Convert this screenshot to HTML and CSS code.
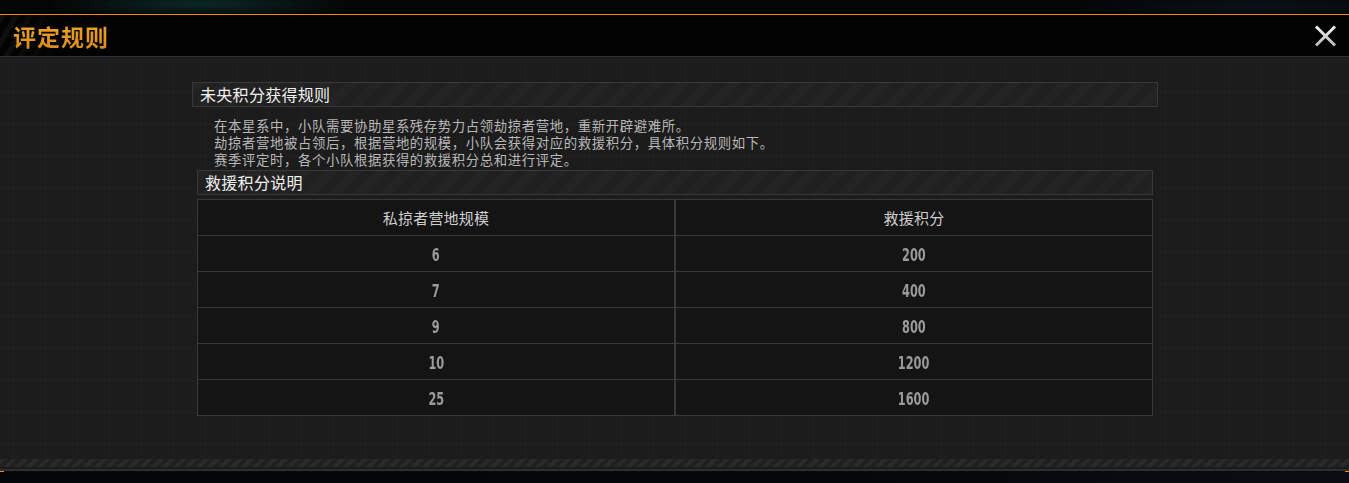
FILE: index.html
```html
<!DOCTYPE html>
<html lang="zh">
<head>
<meta charset="utf-8">
<title>评定规则</title>
<link rel="stylesheet" href="styles.css">
</head>
<body>
<div class="page">
  <div class="topstrip"></div>
  <header class="header">
    <h1 class="title">评定规则</h1>
    <button class="close" aria-label="关闭">
      <svg width="23" height="22" viewBox="0 0 23 22">
        <defs>
          <linearGradient id="xg" x1="0" y1="0" x2="0" y2="1">
            <stop offset="0" stop-color="#f4f4f4"/>
            <stop offset="1" stop-color="#b9b9b9"/>
          </linearGradient>
        </defs>
        <path d="M2 1.5 L21 20.5 M21 1.5 L2 20.5" stroke="url(#xg)" stroke-width="3" stroke-linecap="butt" fill="none"/>
      </svg>
    </button>
  </header>
  <main class="main">
    <div class="content">
      <div class="sec-title sec-title-wide">未央积分获得规则</div>
      <div class="desc">
        <p>在本星系中，小队需要协助星系残存势力占领劫掠者营地，重新开辟避难所。</p>
        <p>劫掠者营地被占领后，根据营地的规模，小队会获得对应的救援积分，具体积分规则如下。</p>
        <p>赛季评定时，各个小队根据获得的救援积分总和进行评定。</p>
      </div>
      <div class="inner">
        <div class="sec-title">救援积分说明</div>
        <table class="score-table">
          <thead>
            <tr><th>私掠者营地规模</th><th>救援积分</th></tr>
          </thead>
          <tbody>
            <tr><td><span class="num">6</span></td><td><span class="num">200</span></td></tr>
            <tr><td><span class="num">7</span></td><td><span class="num">400</span></td></tr>
            <tr><td><span class="num">9</span></td><td><span class="num">800</span></td></tr>
            <tr><td><span class="num">10</span></td><td><span class="num">1200</span></td></tr>
            <tr><td><span class="num">25</span></td><td><span class="num">1600</span></td></tr>
          </tbody>
        </table>
      </div>
    </div>
  </main>
  <footer class="footer">
    <div class="hatch"></div>
    <div class="gap"></div>
    <div class="line"></div>
    <div class="marks"><span class="mark"></span><span class="mark"></span></div>
    <div class="base"></div>
  </footer>
</div>
</body>
</html>
```
FILE: styles.css
```css
* { box-sizing: border-box; }
html, body { margin: 0; padding: 0; }
body {
  background: #000;
  font-family: "Noto Sans CJK SC", "Noto Sans", sans-serif;
  width: 1349px;
  height: 483px;
  overflow: hidden;
}
.page { display: flex; flex-direction: column; height: 483px; }

.topstrip {
  height: 14px;
  background:
    radial-gradient(ellipse 160px 14px at 200px 4px, rgba(20,70,60,0.55), rgba(0,0,0,0) 100%),
    radial-gradient(ellipse 200px 14px at 1260px 6px, rgba(20,30,45,0.5), rgba(0,0,0,0) 100%),
    #040505;
}

.header {
  height: 43px;
  border-top: 1px solid #f08c08;
  border-bottom: 1px solid #303030;
  background:
    linear-gradient(90deg, rgba(3,3,3,0) 0, rgba(3,3,3,1) 60px),
    repeating-linear-gradient(120deg, rgba(255,255,255,0.05) 0 5px, rgba(0,0,0,0) 5px 12px),
    #030303;
  display: flex;
  align-items: center;
  justify-content: space-between;
  padding: 0 12px 0 13px;
}
.title {
  margin: 0;
  font-size: 23px;
  font-weight: 700;
  letter-spacing: 1px;
  line-height: 30px;
  color: #e8981f;
  background: linear-gradient(180deg, #f2a62a, #d98a16);
  -webkit-background-clip: text;
  background-clip: text;
  -webkit-text-fill-color: transparent;
}
.close {
  border: 0;
  background: none;
  padding: 0;
  width: 23px;
  height: 22px;
  margin-top: 1px;
  cursor: pointer;
  display: block;
}
.close svg { display: block; }

.main {
  height: 402px;
  background-color: #1c1c1c;
  background-image:
    linear-gradient(90deg, rgba(255,255,255,0.018) 1px, transparent 1px),
    linear-gradient(180deg, rgba(255,255,255,0.018) 1px, transparent 1px);
  background-size: 32px 32px;
  background-position: 13px 3px;
  padding: 25px 0 0 192px;
}
.content { width: 966px; }

.sec-title {
  height: 25px;
  border: 1px solid #383838;
  background:
    repeating-linear-gradient(135deg, rgba(255,255,255,0.018) 0 9px, rgba(0,0,0,0) 9px 18px),
    #202020;
  color: #f0f0f0;
  font-size: 16px;
  line-height: 23px;
  padding-left: 7px;
  letter-spacing: 0.3px;
}

.desc {
  padding: 10px 0 0 22px;
  color: #b8b8b8;
  font-size: 13.4px;
  line-height: 17px;
  letter-spacing: 0.6px;
}
.desc p { margin: 0; }

.inner { width: 956px; margin: 2px 0 0 5px; }
.inner .sec-title { padding-left: 7px; }

.score-table {
  margin-top: 4px;
  width: 956px;
  border-collapse: collapse;
  table-layout: fixed;
  border: 1px solid #3a3a3a;
}
.score-table th, .score-table td {
  height: 36px;
  padding: 0;
  text-align: center;
  background: #141414;
  border-top: 1px solid #383838;
  border-bottom: 1px solid #383838;
  vertical-align: middle;
}
.score-table th:first-child, .score-table td:first-child {
  border-right: 2px solid #383838;
}
.score-table th {
  font-weight: 400;
  font-size: 15px;
  color: #cfcfcf;
  letter-spacing: 0.2px;
}
.num {
  display: inline-block;
  font-family: "DejaVu Sans Condensed", "DejaVu Sans", sans-serif;
  font-weight: 700;
  font-size: 18px;
  line-height: 20px;
  color: #9a9a9a;
  transform: scaleX(0.7);
  margin-top: -3px;
}

.footer { display: flex; flex-direction: column; flex: 1; }
.hatch {
  height: 8px;
  background:
    repeating-linear-gradient(135deg, #2a2a2a 0 4px, #202020 4px 8px);
}
.gap { height: 2px; background: #1b1b1b; }
.line { height: 2px; background: #2e2e2e; }
.marks {
  height: 1px;
  display: flex;
  justify-content: space-between;
  background: #0a0a0a;
}
.mark { width: 4px; height: 1px; background: #f08c08; }
.base {
  flex: 1;
  background: linear-gradient(90deg, #040506, #05070a 60%, #0a0d12);
}
```
